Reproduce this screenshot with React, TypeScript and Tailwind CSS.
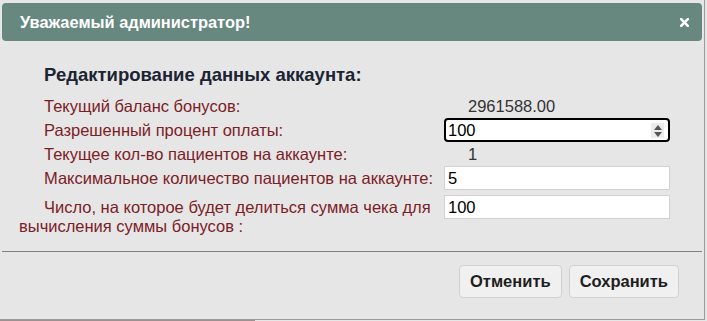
const font = { fontFamily: "'Liberation Sans', Arial, sans-serif" };

function Spinner() {
  return (
    <div className="pointer-events-none absolute right-[6px] top-[5px] flex h-[15px] w-[13px] flex-col items-center justify-center gap-[2px] bg-[#ececec]">
      <svg width="8" height="5" viewBox="0 0 8 5">
        <path d="M4 0 L8 5 L0 5 Z" fill="#555" />
      </svg>
      <svg width="8" height="5" viewBox="0 0 8 5">
        <path d="M0 0 L8 0 L4 5 Z" fill="#555" />
      </svg>
    </div>
  );
}

function Label({ children, top }: { children: React.ReactNode; top?: boolean }) {
  return (
    <div
      className={
        "indent-[25px] text-[16.5px] leading-[19px] text-[#7b2126]" + (top ? " pt-[3px]" : "")
      }
    >
      {children}
    </div>
  );
}

export default function App() {
  return (
    <div className="flex h-[321px] w-[707px] flex-col bg-[#e6e6e6]" style={font}>
      <div className="flex h-[320px] w-[705px] flex-col border-r border-b border-[#9a9a9a] bg-[#e6e6e6]">
        {/* title bar */}
        <div className="mx-[2px] mt-[3px] flex h-[38px] items-center justify-between rounded-[4px] bg-[#66887f] pl-[18px] pr-[13px]">
          <span className="text-[16.4px] font-bold text-white">Уважаемый администратор!</span>
          <svg width="9" height="9" viewBox="0 0 9 9">
            <path d="M1.2 1.2 L7.8 7.8 M7.8 1.2 L1.2 7.8" stroke="#fff" strokeWidth="2.6" strokeLinecap="square" />
          </svg>
        </div>

        {/* body */}
        <div className="pl-[19px]">
          <h2 className="mt-[22px] h-[24px] indent-[25px] text-[18.5px] leading-[24px] font-bold text-[#1b2433]">
            Редактирование данных аккаунта:
          </h2>

          <div className="mt-[7px] grid grid-cols-[425px_226px]">
            <div className="col-span-2 grid h-[24px] grid-cols-subgrid items-center">
              <Label>Текущий баланс бонусов:</Label>
              <div className="indent-[24px] text-[16.5px] text-[#333]">2961588.00</div>
            </div>

            <div className="col-span-2 grid h-[24px] grid-cols-subgrid items-center">
              <Label>Разрешенный процент оплаты:</Label>
              <div className="relative">
                <input
                  type="text"
                  readOnly
                  value="100"
                  className="h-[24px] w-[226px] rounded-[4px] border-2 border-black bg-white pl-[2px] text-[16.5px] text-black outline-none"
                  style={font}
                />
                <Spinner />
              </div>
            </div>

            <div className="col-span-2 grid h-[24px] grid-cols-subgrid items-center">
              <Label>Текущее кол-во пациентов на аккаунте:</Label>
              <div className="indent-[24px] text-[16.5px] text-[#333]">1</div>
            </div>

            <div className="col-span-2 grid h-[24px] grid-cols-subgrid items-center">
              <Label>Максимальное количество пациентов на аккаунте:</Label>
              <input
                type="text"
                readOnly
                value="5"
                className="h-[24px] w-[226px] border border-[#d2d2d2] bg-white pl-[3px] text-[16.5px] text-black outline-none"
                style={font}
              />
            </div>

            <div className="col-span-2 mt-[5px] grid grid-cols-subgrid items-start">
              <Label top>
                Число, на которое будет делиться сумма чека для вычисления суммы бонусов :
              </Label>
              <input
                type="text"
                readOnly
                value="100"
                className="h-[24px] w-[226px] border border-[#d2d2d2] bg-white pl-[3px] text-[16.5px] text-black outline-none"
                style={font}
              />
            </div>
          </div>
        </div>

        {/* footer */}
        <div className="mx-[2px] mt-[15px] border-t border-[#808080]" />
        <div className="mt-[13px] flex justify-end gap-[7px] pr-[25px]">
          <button className="h-[33px] rounded-[4px] border border-[#d0d0d0] bg-[#f0f0f0] px-[10px] text-[16.5px] font-bold text-[#1e1e1e]">
            Отменить
          </button>
          <button className="h-[33px] rounded-[4px] border border-[#d0d0d0] bg-[#f0f0f0] px-[10px] text-[16.5px] font-bold text-[#1e1e1e]">
            Сохранить
          </button>
        </div>
      </div>
      <div className="h-px w-[255px] bg-[#a09090]" />
    </div>
  );
}
